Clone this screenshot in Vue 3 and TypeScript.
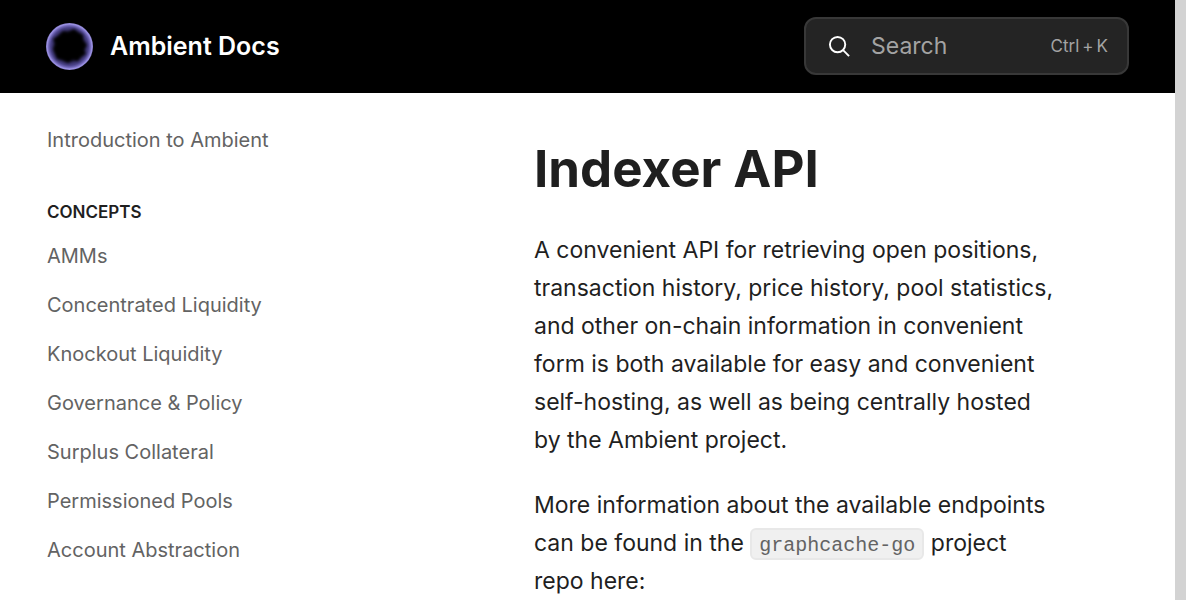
<script setup lang="ts">
const concepts: string[] = [
  'AMMs',
  'Concentrated Liquidity',
  'Knockout Liquidity',
  'Governance & Policy',
  'Surplus Collateral',
  'Permissioned Pools',
  'Account Abstraction',
]
</script>

<template>
  <div class="page">
    <div class="screen">
      <header class="topbar">
        <a class="brand" href="#">
          <svg class="logo" viewBox="0 0 47 47" aria-hidden="true">
            <defs>
              <radialGradient id="ring">
                <stop offset="0.6" stop-color="#29234f" />
                <stop offset="0.8" stop-color="#4a4288" />
                <stop offset="0.89" stop-color="#7268b8" />
                <stop offset="0.95" stop-color="#9a90e2" />
                <stop offset="1" stop-color="#8a81cc" />
              </radialGradient>
              <filter id="soften" x="-20%" y="-20%" width="140%" height="140%">
                <feGaussianBlur stdDeviation="1.5" />
              </filter>
            </defs>
            <circle cx="23.5" cy="23.5" r="23.5" fill="url(#ring)" />
            <path
              class="core"
              filter="url(#soften)"
              d="M17 8L22 9L28 6L32 9L37 12L37 17L41 22L38 27L40 31L35 34L32 38L27 37L22 40L16 37L11 36L9 31L7 26L9 21L7 16L12 13Z"
            />
          </svg>
          <span>Ambient Docs</span>
        </a>
        <button class="search" type="button">
          <svg class="glass" viewBox="0 0 24 24" aria-hidden="true">
            <circle cx="10" cy="10" r="8" />
            <path d="M15.5 15.5L22 22" />
          </svg>
          <span>Search</span>
          <span class="keys"><span>Ctrl</span><span>+</span><span>K</span></span>
        </button>
      </header>
      <div class="body">
        <nav class="sidebar">
          <a class="item" href="#">Introduction to Ambient</a>
          <h2>CONCEPTS</h2>
          <a v-for="c in concepts" :key="c" class="item" href="#">{{ c }}</a>
        </nav>
        <main>
          <h1>Indexer API</h1>
          <p>A convenient API for retrieving open positions, transaction history, price history, pool statistics, and other on-chain information in convenient form is both available for easy and convenient self-hosting, as well as being centrally hosted by the Ambient project.</p>
          <p>More information about the available endpoints can be found in the <code>graphcache-go</code> project repo here:</p>
        </main>
      </div>
    </div>
    <div class="scrollbar"></div>
  </div>
</template>

<style>
body {
  margin: 0;
}
</style>

<style scoped>
.page {
  display: flex;
  height: 100vh;
  overflow: hidden;
  background: #fff;
  color: #1f1f1f;
  font-family: Inter, "Liberation Sans", sans-serif;
}
.screen {
  flex: 1;
  min-width: 0;
}
.scrollbar {
  width: 11px;
  background: #d3d3d3;
}
.topbar {
  display: flex;
  align-items: center;
  justify-content: space-between;
  padding: 17px 46px 18px;
  background: #000;
}
.brand {
  display: flex;
  align-items: center;
  gap: 17px;
  color: #fff;
  font-size: 25px;
  font-weight: 600;
  text-decoration: none;
}
.logo {
  width: 47px;
  height: 47px;
}
.core {
  fill: #000;
}
.search {
  display: flex;
  align-items: center;
  box-sizing: border-box;
  width: 325px;
  height: 58px;
  padding: 0 19px 0 22px;
  border: 2px solid #383838;
  border-radius: 12px;
  background: #242424;
  color: #a3a3a3;
  font: inherit;
  font-size: 23px;
}
.glass {
  width: 23px;
  height: 23px;
  margin-right: 20px;
  fill: none;
  stroke: #fff;
  stroke-width: 2;
}
.keys {
  display: flex;
  gap: 3px;
  margin-left: auto;
  font-size: 17px;
}
.body {
  display: flex;
}
.sidebar {
  flex: none;
  width: 441px;
  padding: 23px 0 0 47px;
}
.item {
  display: block;
  color: #636363;
  font-size: 20px;
  line-height: 49px;
  text-decoration: none;
}
h2 {
  margin: 34px 0 7px;
  font-size: 17px;
  font-weight: 600;
  line-height: 26px;
}
main {
  flex: 1;
  min-width: 0;
  padding: 43px 115px 0 46px;
}
h1 {
  margin: 0 0 29px;
  font-size: 51px;
  font-weight: 700;
  line-height: 66px;
}
p {
  margin: 0 0 27px;
  font-size: 23px;
  line-height: 38px;
}
code {
  display: inline-block;
  padding: 4px 7px 0;
  border: 2px solid #e8e8e8;
  border-radius: 6px;
  background: #f0f0f0;
  color: #636363;
  font-family: "Liberation Mono", monospace;
  font-size: 20px;
  line-height: 24px;
}
</style>
